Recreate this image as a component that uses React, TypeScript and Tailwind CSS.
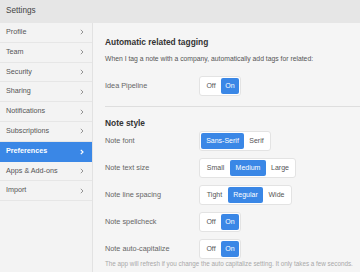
const menu = [
  "Profile",
  "Team",
  "Security",
  "Sharing",
  "Notifications",
  "Subscriptions",
  "Preferences",
  "Apps & Add-ons",
  "Import",
];

type Option = { label: string; width: number };

function Chevron({ active }: { active?: boolean }) {
  return (
    <svg width="4" height="6" viewBox="0 0 4 6" className="shrink-0">
      <path
        d="M0.8 0.8 L3 3 L0.8 5.2"
        fill="none"
        stroke={active ? "#ffffff" : "#8a8a8a"}
        strokeWidth={active ? 1.2 : 0.9}
      />
    </svg>
  );
}

function Segmented({ options, selected }: { options: Option[]; selected: number }) {
  return (
    <div className="flex h-[20px] rounded-[3px] border border-[#e3e3e3] bg-white p-[1px]">
      {options.map((o, i) => (
        <div
          key={o.label}
          style={{ width: o.width }}
          className={
            i === selected
              ? "flex items-center justify-center rounded-[2px] bg-[#3a87e6] text-[7px] text-white"
              : "flex items-center justify-center text-[7px] text-[#555]"
          }
        >
          {o.label}
        </div>
      ))}
    </div>
  );
}

function Row({ label, options, selected, className }: { label: string; options: Option[]; selected: number; className: string }) {
  return (
    <div className={"flex items-center " + className}>
      <div className="w-[94px] text-[7.3px] text-[#666]">{label}</div>
      <Segmented options={options} selected={selected} />
    </div>
  );
}

const onOff: Option[] = [
  { label: "Off", width: 20 },
  { label: "On", width: 18 },
];

export default function App() {
  return (
    <div className="w-[360px] h-[272px] overflow-hidden bg-[#f4f4f4] font-['Liberation_Sans',Arial,sans-serif]">
      <div className="h-[23px] bg-[#e6e6e6] px-[6px] flex items-center text-[8.2px] text-[#444]">
        Settings
      </div>
      <div className="flex h-[249px]">
        <div className="w-[93px] border-r border-[#e2e2e2] bg-[#f3f3f3]">
          {menu.map((m) => {
            const active = m === "Preferences";
            return (
              <div
                key={m}
                className={
                  active
                    ? "h-[19.8px] pl-[6px] pr-[8px] flex items-center justify-between bg-[#3a87e6] text-white font-bold text-[7.2px]"
                    : "h-[19.8px] pl-[6px] pr-[8px] flex items-center justify-between border-b border-[#e6e6e6] text-[#555] text-[7.2px]"
                }
              >
                <span>{m}</span>
                <Chevron active={active} />
              </div>
            );
          })}
        </div>
        <div className="flex-1 flex flex-col pl-[12px] bg-[#f5f5f5]">
          <div className="mt-[13px] h-[12px] leading-[12px] text-[8.4px] font-bold text-[#333]">
            Automatic related tagging
          </div>
          <div className="mt-[6px] h-[10px] leading-[10px] text-[6.8px] text-[#555] whitespace-nowrap">
            When I tag a note with a company, automatically add tags for related:
          </div>
          <Row className="mt-[12px] h-[20px]" label="Idea Pipeline" options={onOff} selected={1} />
          <div className="mt-[10px] border-t border-[#dedede]" />
          <div className="mt-[10px] h-[12px] leading-[12px] text-[8.4px] font-bold text-[#333]">
            Note style
          </div>
          <Row
            className="mt-[2px] h-[20px]"
            label="Note font"
            options={[
              { label: "Sans-Serif", width: 43 },
              { label: "Serif", width: 25 },
            ]}
            selected={0}
          />
          <Row
            className="mt-[7px] h-[20px]"
            label="Note text size"
            options={[
              { label: "Small", width: 29 },
              { label: "Medium", width: 36 },
              { label: "Large", width: 28 },
            ]}
            selected={1}
          />
          <Row
            className="mt-[7px] h-[20px]"
            label="Note line spacing"
            options={[
              { label: "Tight", width: 27 },
              { label: "Regular", width: 35 },
              { label: "Wide", width: 27 },
            ]}
            selected={1}
          />
          <Row className="mt-[7px] h-[20px]" label="Note spellcheck" options={onOff} selected={1} />
          <Row className="mt-[7px] h-[20px]" label="Note auto-capitalize" options={onOff} selected={1} />
          <div className="mt-[1px] h-[8px] leading-[8px] text-[6.3px] text-[#a8a8a8] whitespace-nowrap">
            The app will refresh if you change the auto capitalize setting. It only takes a few seconds.
          </div>
        </div>
      </div>
    </div>
  );
}
